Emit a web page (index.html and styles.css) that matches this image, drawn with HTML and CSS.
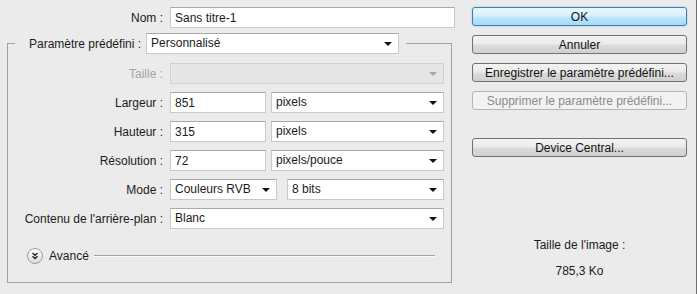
FILE: index.html
```html
<!DOCTYPE html>
<html lang="fr">
<head>
    <meta charset="UTF-8">
    <title>Nouveau</title>
    <link rel="stylesheet" href="styles.css">
</head>
<body>
    <div class="dialog">
        <div class="main">
            <div class="row name-row">
                <label class="lbl">Nom :</label>
                <input type="text" class="field grow" value="Sans titre-1">
            </div>

            <fieldset class="preset-box">
                <legend class="preset-legend">
                    <span class="legend-text">Paramètre prédéfini :</span>
                    <div class="select preset-select">Personnalisé</div>
                </legend>

                <div class="rows">
                    <div class="row">
                        <label class="lbl disabled">Taille :</label>
                        <div class="select grow off"></div>
                    </div>
                    <div class="row">
                        <label class="lbl">Largeur :</label>
                        <input type="text" class="field num" value="851">
                        <div class="select grow">pixels</div>
                    </div>
                    <div class="row">
                        <label class="lbl">Hauteur :</label>
                        <input type="text" class="field num" value="315">
                        <div class="select grow">pixels</div>
                    </div>
                    <div class="row">
                        <label class="lbl">Résolution :</label>
                        <input type="text" class="field num" value="72">
                        <div class="select grow">pixels/pouce</div>
                    </div>
                    <div class="row">
                        <label class="lbl">Mode :</label>
                        <div class="select mode">Couleurs RVB</div>
                        <div class="select grow bits">8 bits</div>
                    </div>
                    <div class="row">
                        <label class="lbl">Contenu de l'arrière-plan :</label>
                        <div class="select grow">Blanc</div>
                    </div>
                </div>

                <div class="advanced">
                    <svg class="adv-icon" width="16" height="16" viewBox="0 0 16 16">
                        <defs>
                            <linearGradient id="advg" x1="0" y1="0" x2="0" y2="1">
                                <stop offset="0" stop-color="#ffffff"/>
                                <stop offset="1" stop-color="#dcdcdc"/>
                            </linearGradient>
                        </defs>
                        <circle cx="8" cy="8" r="7.5" fill="url(#advg)" stroke="#9a9a9a"/>
                        <path d="M5.5 5 L8 7.2 L10.5 5 M5.5 8.3 L8 10.5 L10.5 8.3" fill="none" stroke="#222" stroke-width="1.4"/>
                    </svg>
                    <span class="adv-text">Avancé</span>
                    <div class="adv-line"></div>
                </div>
            </fieldset>
        </div>

        <div class="side">
            <button class="btn ok">OK</button>
            <button class="btn">Annuler</button>
            <button class="btn">Enregistrer le paramètre prédéfini...</button>
            <button class="btn" disabled>Supprimer le paramètre prédéfini...</button>
            <button class="btn device">Device Central...</button>

            <div class="img-size">
                <div>Taille de l'image :</div>
                <div>785,3 Ko</div>
            </div>
        </div>
    </div>
</body>
</html>
```

FILE: styles.css
```css
* {
    box-sizing: border-box;
    margin: 0;
    padding: 0;
}

body {
    background: #ebebeb;
    font-family: "Liberation Sans", Arial, sans-serif;
    font-size: 12px;
    color: #1b1b1b;
}

.dialog {
    display: flex;
    width: 697px;
    height: 294px;
    padding-top: 7px;
    border-right: 1px solid #707070;
}

.main {
    width: 448px;
    margin-left: 7px;
}

.row {
    display: flex;
    align-items: center;
    gap: 5px;
    height: 21px;
}

.lbl {
    width: 155px;
    margin-right: 2px;
    text-align: right;
    white-space: nowrap;
}

.lbl.disabled {
    color: #a3a3a3;
}

.name-row .lbl {
    width: 156px;
}

.grow {
    flex: 1;
}

.field,
.select {
    height: 21px;
    background: #fff;
    border: 1px solid #c9c9c9;
    border-top-color: #a9a9a9;
    font-family: inherit;
    font-size: 12px;
    color: #1b1b1b;
    padding: 0 4px;
    line-height: 19px;
    outline: none;
}

.field.num {
    width: 96px;
    flex: none;
}

.select {
    position: relative;
    white-space: nowrap;
}

.select::after {
    content: "";
    position: absolute;
    right: 6px;
    top: 8px;
    border-left: 4px solid transparent;
    border-right: 4px solid transparent;
    border-top: 4px solid #111;
}

.select.off {
    background: #e6e6e6;
    border-color: #d0d0d0;
}

.select.off::after {
    border-top-color: #a8a8a8;
}

.select.mode {
    width: 107px;
}

.select.bits {
    margin-left: 5px;
}

/* preset fieldset */
.preset-box {
    width: 445px;
    margin-top: 5px;
    border: 1px solid #a2a2a2;
    padding: 0 7px 18px 0;
}

.preset-legend {
    display: flex;
    align-items: center;
    margin-left: 7px;
    padding: 0 7px 0 14px;
}

.legend-text {
    margin-right: 5px;
    white-space: nowrap;
}

.preset-select {
    width: 253px;
}

.rows {
    display: flex;
    flex-direction: column;
    gap: 8px;
    padding-top: 9px;
}

.advanced {
    display: flex;
    align-items: center;
    margin-top: 19px;
    padding-left: 19px;
    padding-right: 9px;
}

.adv-text {
    margin-left: 6px;
}

.adv-line {
    flex: 1;
    margin-left: 5px;
    height: 2px;
    border-top: 1px solid #a2a2a2;
    border-bottom: 1px solid #fafafa;
}

/* buttons */
.side {
    width: 215px;
    margin-left: 17px;
    display: flex;
    flex-direction: column;
    gap: 9px;
}

.btn {
    height: 19px;
    font-family: inherit;
    font-size: 12px;
    color: #111;
    border: 1px solid #707070;
    border-radius: 3px;
    background: linear-gradient(#f3f3f3 0%, #ebebeb 48%, #dcdcdc 52%, #d0d0d0 100%);
}

.btn.ok {
    border-color: #3c7fb1;
    background: linear-gradient(#e8f6fd 0%, #d9f0fc 48%, #bee6fd 52%, #a7d9f5 100%);
    box-shadow: 0 0 2px #7ec9ef;
}

.btn:disabled {
    color: #8a8a8a;
    border-color: #b5b5b5;
    background: #f2f2f2;
}

.btn.device {
    margin-top: 19px;
}

.img-size {
    margin-top: 66px;
    text-align: center;
    line-height: 26px;
}
```
